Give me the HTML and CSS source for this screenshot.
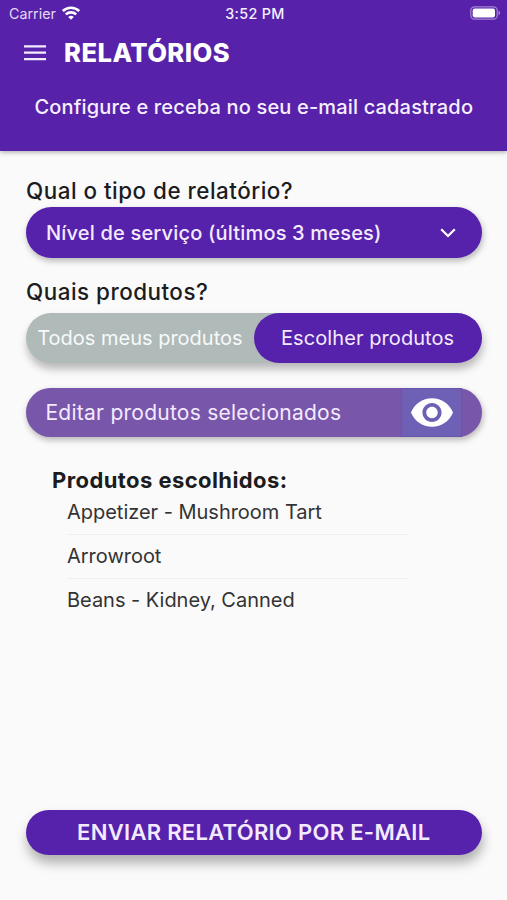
FILE: index.html
```html
<!DOCTYPE html>
<html lang="pt-BR">
<head>
<meta charset="utf-8">
<title>Relatórios</title>
<link rel="stylesheet" href="styles.css">
</head>
<body>
<header class="header">
  <div class="status">
    <div class="carrier"><span>Carrier</span>
      <svg class="wifi" viewBox="0 0 18 14" width="18" height="14" fill="none" stroke="#fff" stroke-width="2.6"><path d="M.8 5.1A11.8 11.8 0 0 1 17.2 5.1M3.8 8.4A7.6 7.6 0 0 1 14.2 8.4"/><path d="M9 13.7 6.2 11A4 4 0 0 1 11.8 11Z" fill="#fff" stroke="none"/></svg>
    </div>
    <span class="time">3:52 PM</span>
    <svg class="battery" viewBox="0 0 31 14" width="31" height="14"><rect x=".8" y=".8" width="26.4" height="12.4" rx="3.6" fill="none" stroke="#fff" stroke-opacity=".45" stroke-width="1.2"/><rect x="2.7" y="2.6" width="22.3" height="8.8" rx="1.8" fill="#fff"/><path d="M28.5 4.8q1.7.6 1.7 2.2t-1.7 2.2z" fill="#fff" fill-opacity=".45"/></svg>
  </div>
  <div class="titlebar">
    <svg class="menu" viewBox="0 0 22 16" width="22" height="16" fill="#f3ebff"><path d="M0 .3h22v2.3H0zM0 6.5h22v2.3H0zM0 12.9h22v2.3H0z"/></svg>
    <h1 class="title">RELATÓRIOS</h1>
  </div>
  <p class="subtitle"><span>Configure e receba no seu e-mail cadastrado</span></p>
</header>
<main class="content">
  <h2 class="label"><span>Qual o tipo de relatório?</span></h2>
  <div class="pill select"><span class="select-text">Nível de serviço (últimos 3 meses)</span>
    <svg viewBox="0 0 16 10" width="16" height="10" fill="none" stroke="#fff" stroke-width="2.3"><path d="M1.2 1.3 8 8 14.8 1.3"/></svg>
  </div>
  <h2 class="label second"><span>Quais produtos?</span></h2>
  <div class="pill toggle">
    <div class="option"><span class="all">Todos meus produtos</span></div>
    <div class="option active"><span class="choose">Escolher produtos</span></div>
  </div>
  <div class="pill edit"><span class="edit-text">Editar produtos selecionados</span>
    <div class="eye"><svg viewBox="1 4.5 22 15" width="42" height="29" fill="#fff"><path d="M12 4.5C7 4.5 2.73 7.61 1 12c1.73 4.39 6 7.5 11 7.5s9.27-3.11 11-7.5c-1.73-4.39-6-7.5-11-7.5zM12 17c-2.76 0-5-2.24-5-5s2.24-5 5-5 5 2.24 5 5-2.24 5-5 5zm0-8c-1.66 0-3 1.34-3 3s1.34 3 3 3 3-1.34 3-3-1.34-3-3-3z"/></svg></div>
  </div>
  <section class="chosen">
    <h3 class="chosen-title"><span>Produtos escolhidos:</span></h3>
    <ul class="list">
      <li><span>Appetizer - Mushroom Tart</span></li>
      <li><span>Arrowroot</span></li>
      <li><span>Beans - Kidney, Canned</span></li>
    </ul>
  </section>
  <div class="pill send"><span>ENVIAR RELATÓRIO POR E-MAIL</span></div>
</main>
</body>
</html>
```
FILE: styles.css
```css
* { box-sizing: border-box; }
body { margin: 0; height: 900px; display: flex; flex-direction: column; background: #fafafa; color: #1c1c1e; font-family: Inter, "Liberation Sans", sans-serif; overflow: hidden; }
h1, h2, h3, p, ul { margin: 0; padding: 0; list-style: none; }
svg { display: block; flex: none; }
span { white-space: nowrap; }
.header { height: 151px; flex: none; background: #5722a9; color: #f6efff; box-shadow: 0 1px 5px rgba(0,0,0,.35); }
.status { height: 28px; display: grid; grid-template-columns: 1fr auto 1fr; align-items: center; padding: 0 6px 2px 9px; font-size: 14.3px; }
.carrier { display: flex; gap: 6px; align-items: center; color: #e5d9f6; }
.wifi { margin-top: -1px; }
.time { font-weight: 500; letter-spacing: .35px; }
.battery { justify-self: end; }
.titlebar { height: 49px; display: flex; align-items: center; gap: 18px; padding-left: 24px; }
.title { font-size: 25.6px; font-weight: 800; line-height: 30px; letter-spacing: .45px; color: #fff; }
.subtitle { height: 60px; line-height: 60px; padding-left: 34.5px; font-size: 20px; font-weight: 500; letter-spacing: .16px; }
.content { flex: 1; display: flex; flex-direction: column; padding: 25px 25px 45px 26px; }
.label { height: 31px; line-height: 29px; font-size: 22.4px; font-weight: 500; letter-spacing: .5px; }
.label.second { margin-top: 19px; height: 36px; }
.pill { width: 455.5px; border-radius: 26px; flex: none; display: flex; align-items: center; background: #5621ab; color: #f4eaff; font-size: 20px; box-shadow: 1px 3px 6px rgba(0,0,0,.28); }
.select { height: 51px; padding: 0 26px 0 20px; justify-content: space-between; font-weight: 500; letter-spacing: .18px; }
.toggle { height: 50px; background: #b0bab9; box-shadow: 1px 6px 9px rgba(0,0,0,.27); }
.option { flex: 1; height: 100%; display: flex; align-items: center; justify-content: center; border-radius: 26px; }
.all { color: #f7faf9; }
.active { background: #5621ab; letter-spacing: .08px; }
.edit { height: 49px; margin-top: 25px; padding: 0 19.5px; background: #7856aa; justify-content: space-between; font-size: 21px; letter-spacing: .25px; }
.eye { width: 61px; height: 49px; display: grid; place-items: center; background: #6d60b5; border: 1px solid #6855ac; }
.chosen { padding: 32px 0 0 26px; }
.chosen-title { height: 22px; line-height: 23px; font-size: 22px; font-weight: 700; letter-spacing: .42px; }
.list { width: 340px; margin-left: 15px; color: #333; font-size: 20px; letter-spacing: -.02px; }
.list li { height: 44px; line-height: 42px; border-bottom: 1px solid #efefef; }
.list li:last-child { border: 0; }
.send { height: 45px; margin-top: auto; padding-bottom: 2px; justify-content: center; font-size: 22px; font-weight: 600; letter-spacing: .3px; box-shadow: 1px 8px 12px rgba(0,0,0,.3); }
```
